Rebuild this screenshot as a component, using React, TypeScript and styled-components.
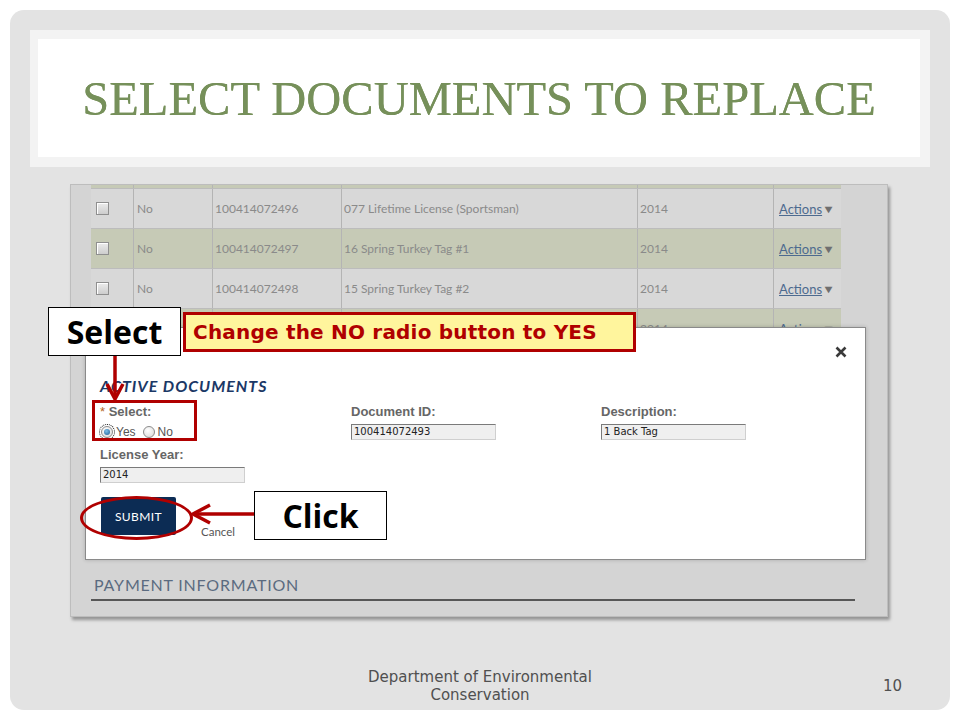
import React from "react";
import styled, { createGlobalStyle } from "styled-components";

const GlobalStyle = createGlobalStyle`
  html, body {
    margin: 0;
    padding: 0;
    background: #ffffff;
  }
  * {
    box-sizing: border-box;
  }
`;

const Page = styled.div`
  width: 960px;
  height: 720px;
  padding: 10px;
`;

const Slide = styled.div`
  position: relative;
  width: 940px;
  height: 700px;
  border-radius: 14px;
  background: #e3e3e3;
  padding: 20px 20px 0;
  display: flex;
  flex-direction: column;
`;

const TitleBand = styled.div`
  height: 137px;
  padding: 9px 10px 10px 8px;
  background: #f3f3f3;
`;

const TitleInner = styled.div`
  height: 100%;
  background: #ffffff;
  display: flex;
  align-items: center;
  justify-content: center;
`;

const Title = styled.h1`
  margin: 0;
  font-family: "Liberation Serif", serif;
  font-weight: 400;
  font-size: 48.5px;
  color: #76905a;
  text-shadow: 0 0 0.4px #76905a;
`;

const Panel = styled.div`
  position: relative;
  margin: 17px 0 0 40px;
  width: 818px;
  height: 433px;
  padding-left: 20px;
  background: #d4d4d4;
  border: 1px solid #bdbdbd;
  box-shadow: 2px 3px 3px rgba(0, 0, 0, 0.35);
`;

const Row = styled.div<{ $tone: "light" | "green"; $short?: boolean }>`
  width: 750px;
  height: ${(p) => (p.$short ? "4px" : "40px")};
  display: grid;
  grid-template-columns: 43px 79px 129px 296px 136px 67px;
  background: ${(p) => (p.$tone === "green" ? "#c6cab6" : "#d8d8d8")};
  border-bottom: 1px solid #bcbcbc;
`;

const Cell = styled.div<{ $pad?: number; $last?: boolean }>`
  display: flex;
  align-items: center;
  padding-left: ${(p) => p.$pad ?? 2}px;
  border-right: ${(p) => (p.$last ? "none" : "1px solid #b4b4b4")};
  font-family: Lato, "Liberation Sans", sans-serif;
  font-size: 12px;
  color: #8a8a8a;
  white-space: nowrap;
  overflow: hidden;
`;

const Check = styled.span`
  width: 13px;
  height: 13px;
  border: 1px solid #8f8f8f;
  background: linear-gradient(#ececec, #cdcdcd);
  box-shadow: inset 1px 1px 0 #ffffff;
`;

const ActionLink = styled.span`
  font-size: 13px;
  color: #4d6a8f;
  text-decoration: underline;
`;

const Caret = styled.span`
  margin-left: 1px;
  font-size: 11px;
  transform: scaleX(1.2);
  color: #6f6f6f;
`;

const Modal = styled.div`
  position: absolute;
  left: 14px;
  top: 142px;
  width: 781px;
  height: 233px;
  background: #ffffff;
  border: 1px solid #8a8a8a;
  box-shadow: 0 0 4px rgba(0, 0, 0, 0.2);
  padding: 18px 18px 0 14px;
`;

const CloseRow = styled.div`
  display: flex;
  justify-content: flex-end;
  height: 12px;
`;

const ModalTitle = styled.div`
  margin-top: 19px;
  height: 18px;
  line-height: 18px;
  font-family: Lato, "Liberation Sans", sans-serif;
  font-weight: 700;
  font-style: italic;
  font-size: 16px;
  letter-spacing: 1px;
  color: #1b3866;
`;

const FieldGrid = styled.div`
  margin-top: 9px;
  display: grid;
  grid-template-columns: 251px 250px 1fr;
  row-gap: 7px;
`;

const Field = styled.div`
  display: flex;
  flex-direction: column;
  gap: 5px;
`;

const Label = styled.div`
  height: 15px;
  line-height: 15px;
  font-family: "Liberation Sans", Arial, sans-serif;
  font-weight: 700;
  font-size: 13px;
  color: #666666;
`;

const Req = styled.span`
  color: #b5651d;
  font-weight: 400;
`;

const TextBox = styled.div`
  width: 145px;
  height: 16px;
  padding-left: 2px;
  background: #efefef;
  border-style: solid;
  border-width: 1px;
  border-color: #7a7a7a #cfcfcf #cfcfcf #7a7a7a;
  font-family: "DejaVu Sans", Verdana, sans-serif;
  font-size: 10px;
  line-height: 14px;
  color: #222222;
`;

const RadioRow = styled.div`
  height: 16px;
  display: flex;
  align-items: center;
  gap: 3px;
  font-family: "Liberation Sans", Arial, sans-serif;
  font-size: 12px;
  color: #555555;
`;

const Radio = styled.span<{ $on?: boolean }>`
  position: relative;
  width: 12px;
  height: 12px;
  margin-left: ${(p) => (p.$on ? "1px" : "4px")};
  border-radius: 50%;
  border: 1px solid #8c8c8c;
  background: radial-gradient(circle at 40% 35%, #ffffff, #d6d6d6);
  outline: ${(p) => (p.$on ? "1px dotted #111" : "none")};
  outline-offset: 1px;
  &::after {
    content: "";
    position: absolute;
    inset: 2px;
    border-radius: 50%;
    background: ${(p) =>
      p.$on ? "radial-gradient(circle at 40% 35%, #7cc0ea, #1c5b92)" : "transparent"};
  }
`;

const Actions = styled.div`
  margin-top: 14px;
  display: flex;
  align-items: flex-end;
`;

const SubmitButton = styled.div`
  width: 75px;
  height: 38px;
  margin-left: 1px;
  border-radius: 2px;
  background: #0c2c54;
  display: flex;
  align-items: center;
  justify-content: center;
  font-family: Lato, "Liberation Sans", sans-serif;
  font-size: 12px;
  letter-spacing: 0.4px;
  color: #ffffff;
`;

const CancelText = styled.span`
  margin: 0 0 -3px 25px;
  font-family: Lato, "Liberation Sans", sans-serif;
  font-size: 11.5px;
  color: #555555;
`;

const Payment = styled.div`
  margin-top: 228px;
  width: 764px;
  padding: 0 0 6px 3px;
  border-bottom: 2px solid #575757;
  font-family: Lato, "Liberation Sans", sans-serif;
  font-size: 16px;
  line-height: 16px;
  letter-spacing: 0.8px;
  color: #5b6b80;
`;

const Footer = styled.div`
  margin-top: auto;
  margin-bottom: 6px;
  display: grid;
  grid-template-columns: 1fr auto 1fr;
  align-items: center;
  font-family: "DejaVu Sans", "Open Sans", sans-serif;
  font-size: 15px;
  line-height: 18px;
  color: #505050;
`;

const FooterText = styled.div`
  grid-column: 2;
  text-align: center;
`;

const PageNumber = styled.div`
  justify-self: end;
  padding-right: 28px;
`;

const Callout = styled.div<{ $x: number; $y: number }>`
  position: absolute;
  left: ${(p) => p.$x}px;
  top: ${(p) => p.$y}px;
  width: 133px;
  height: 49px;
  background: #ffffff;
  border: 1px solid #000000;
  display: flex;
  align-items: center;
  justify-content: center;
  font-family: "Open Sans", "DejaVu Sans", sans-serif;
  font-weight: 700;
  font-size: 32px;
  color: #000000;
  z-index: 3;
`;

const Hint = styled.div`
  position: absolute;
  left: 173px;
  top: 302px;
  width: 453px;
  height: 40px;
  padding-left: 7px;
  background: #fff59d;
  border: 3px solid #b00000;
  display: flex;
  align-items: center;
  font-family: "DejaVu Sans", sans-serif;
  font-weight: 700;
  font-size: 20px;
  letter-spacing: 0.2px;
  color: #b00000;
  z-index: 3;
`;

const Marker = styled.div<{ $x: number; $y: number; $w: number; $h: number; $round?: boolean }>`
  position: absolute;
  left: ${(p) => p.$x}px;
  top: ${(p) => p.$y}px;
  width: ${(p) => p.$w}px;
  height: ${(p) => p.$h}px;
  border: 3px solid #b00000;
  border-radius: ${(p) => (p.$round ? "50%" : "0")};
  z-index: 3;
`;

const ArrowSvg = styled.svg<{ $x: number; $y: number }>`
  position: absolute;
  left: ${(p) => p.$x}px;
  top: ${(p) => p.$y}px;
  overflow: visible;
  z-index: 3;
`;

type Doc = { id: string; desc: string; tone: "light" | "green"; covered?: boolean };

const docs: Doc[] = [
  { id: "100414072496", desc: "077 Lifetime License (Sportsman)", tone: "light" },
  { id: "100414072497", desc: "16 Spring Turkey Tag #1", tone: "green" },
  { id: "100414072498", desc: "15 Spring Turkey Tag #2", tone: "light" },
  // this row sits behind the callout and the dialog; only its right end peeks out
  { id: "100414072493", desc: "1 Back Tag", tone: "green", covered: true },
];

const CloseIcon = () => (
  <svg width="12" height="12" viewBox="0 0 12 12">
    <path d="M1.5 1.5 L10.5 10.5 M10.5 1.5 L1.5 10.5" stroke="#3a3a3a" strokeWidth="2.6" />
  </svg>
);

export default function App() {
  return (
    <Page>
      <GlobalStyle />
      <Slide>
        <TitleBand>
          <TitleInner>
            <Title>SELECT DOCUMENTS TO REPLACE</Title>
          </TitleInner>
        </TitleBand>

        <Panel>
          <Row $tone="green" $short>
            <Cell />
            <Cell />
            <Cell />
            <Cell />
            <Cell />
            <Cell $last />
          </Row>
          {docs.map((d) => (
            <Row key={d.id} $tone={d.tone}>
              <Cell $pad={5}>{!d.covered && <Check />}</Cell>
              <Cell $pad={3}>{!d.covered && "No"}</Cell>
              <Cell>{!d.covered && d.id}</Cell>
              <Cell>{!d.covered && d.desc}</Cell>
              <Cell>2014</Cell>
              <Cell $pad={5} $last>
                <ActionLink>Actions</ActionLink>
                <Caret>▼</Caret>
              </Cell>
            </Row>
          ))}

          <Payment>PAYMENT INFORMATION</Payment>

          <Modal>
            <CloseRow>
              <CloseIcon />
            </CloseRow>
            <ModalTitle>ACTIVE DOCUMENTS</ModalTitle>
            <FieldGrid>
              <Field>
                <Label>
                  <Req>*</Req> Select:
                </Label>
                <RadioRow>
                  <Radio $on />
                  <span>Yes</span>
                  <Radio />
                  <span>No</span>
                </RadioRow>
              </Field>
              <Field>
                <Label>Document ID:</Label>
                <TextBox>100414072493</TextBox>
              </Field>
              <Field>
                <Label>Description:</Label>
                <TextBox>1 Back Tag</TextBox>
              </Field>
              <Field>
                <Label>License Year:</Label>
                <TextBox>2014</TextBox>
              </Field>
            </FieldGrid>
            <Actions>
              <SubmitButton>SUBMIT</SubmitButton>
              <CancelText>Cancel</CancelText>
            </Actions>
          </Modal>
        </Panel>

        <Footer>
          <FooterText>
            Department of Environmental
            <br />
            Conservation
          </FooterText>
          <PageNumber>10</PageNumber>
        </Footer>

        <Callout $x={38} $y={297}>Select</Callout>
        <Hint>Change the NO radio button to YES</Hint>
        <ArrowSvg $x={95} $y={346} width="20" height="46">
          <path d="M10 0 L10 42" stroke="#b00000" strokeWidth="3.5" fill="none" />
          <path d="M2 28 L10 43 L18 28" stroke="#b00000" strokeWidth="3.5" fill="none" />
        </ArrowSvg>
        <Marker $x={82} $y={390} $w={105} $h={41} />
        <Marker $x={70} $y={486} $w={113} $h={44} $round />
        <ArrowSvg $x={180} $y={492} width="64" height="24">
          <path d="M4 12 L64 12" stroke="#b00000" strokeWidth="3.5" fill="none" />
          <path d="M20 3 L3 12 L20 21" stroke="#b00000" strokeWidth="3.5" fill="none" />
        </ArrowSvg>
        <Callout $x={244} $y={481}>Click</Callout>
      </Slide>
    </Page>
  );
}
